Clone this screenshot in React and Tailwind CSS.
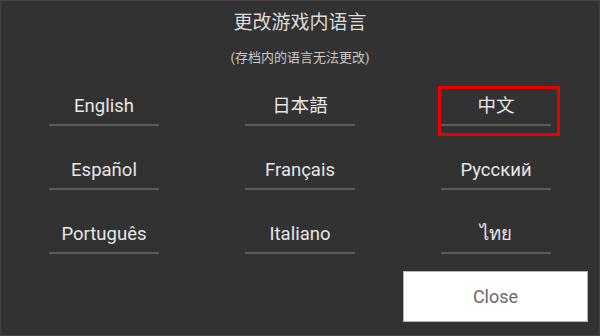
const languages = [
  { id: "en", label: "English" },
  { id: "ja", label: "日本語" },
  { id: "zh", label: "中文", selected: true },
  { id: "es", label: "Español" },
  { id: "fr", label: "Français" },
  { id: "ru", label: "Русский" },
  { id: "pt", label: "Português" },
  { id: "it", label: "Italiano" },
  { id: "th", label: "ไทย" },
];

const fontStack = {
  fontFamily:
    'Roboto, "Noto Sans CJK SC", "Noto Sans", "DejaVu Sans", sans-serif',
};

const LanguageCell = ({ lang }) => {
  return (
    <div className="relative flex flex-col items-center justify-self-center w-[110px] h-[42px] cursor-pointer">
      <div className="h-[39px] pt-[4px] flex items-center justify-center text-[18.5px] text-[#e6e6e6] leading-none">
        {lang.label}
      </div>
      <div className="w-[110px] h-[2px] bg-[#5c5c5c]" />
      {lang.selected && (
        <span className="absolute top-[1px] -left-[3px] -right-[9px] -bottom-[9px] border-[3px] border-[#e60000]" />
      )}
    </div>
  );
};

const App = () => {
  return (
    <div
      className="w-[600px] h-[336px] bg-[#323232] border border-[#454545] flex flex-col overflow-hidden"
      style={fontStack}
    >
      <h1 className="mt-[10px] text-center text-[19px] leading-[24px] text-[#dcdcdc]">
        更改游戏内语言
      </h1>
      <p className="mt-[16px] text-center text-[13px] leading-[14px] text-[#c8c8c8]">
        (存档内的语言无法更改)
      </p>
      <div className="mt-[20px] px-[5px] grid grid-cols-3 gap-y-[22px]">
        {languages.map((lang) => (
          <LanguageCell key={lang.id} lang={lang} />
        ))}
      </div>
      <div className="flex justify-end pr-[11px] mt-[16px]">
        <button className="w-[185px] h-[51px] bg-white border border-[#b5b5b5] text-[18px] text-[#6a6a6a]">
          Close
        </button>
      </div>
    </div>
  );
};

export default App;
